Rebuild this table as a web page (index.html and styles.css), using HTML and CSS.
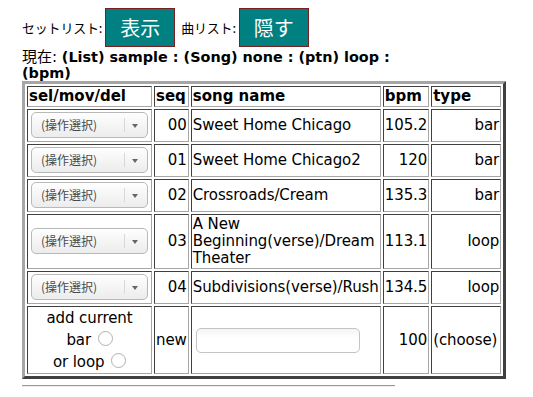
FILE: index.html
```html
<!DOCTYPE html>
<html lang="ja">
<head>
<meta charset="utf-8">
<title>セットリスト</title>
<link rel="stylesheet" href="styles.css">
</head>
<body>
<div class="page">
  <div class="toolbar">
    <span class="label">セットリスト:</span>
    <button class="toggle">表示</button>
    <span class="label">曲リスト:</span>
    <button class="toggle">隠す</button>
  </div>
  <div class="status">現在: <b>(List) sample : (Song) none : (ptn) loop : (bpm)</b></div>
  <table class="songs">
    <thead>
      <tr>
        <th class="c-sel">sel/mov/del</th>
        <th>seq</th>
        <th class="c-name">song name</th>
        <th>bpm</th>
        <th class="c-type">type</th>
      </tr>
    </thead>
    <tbody>
      <tr>
        <td><div class="op">(操作選択)<span class="arrow"></span></div></td>
        <td class="num">00</td>
        <td>Sweet Home Chicago</td>
        <td class="num">105.2</td>
        <td class="num">bar</td>
      </tr>
      <tr>
        <td><div class="op">(操作選択)<span class="arrow"></span></div></td>
        <td class="num">01</td>
        <td>Sweet Home Chicago2</td>
        <td class="num">120</td>
        <td class="num">bar</td>
      </tr>
      <tr>
        <td><div class="op">(操作選択)<span class="arrow"></span></div></td>
        <td class="num">02</td>
        <td>Crossroads/Cream</td>
        <td class="num">135.3</td>
        <td class="num">bar</td>
      </tr>
      <tr>
        <td><div class="op">(操作選択)<span class="arrow"></span></div></td>
        <td class="num">03</td>
        <td class="wrap">A New Beginning(verse)/Dream Theater</td>
        <td class="num">113.1</td>
        <td class="num">loop</td>
      </tr>
      <tr>
        <td><div class="op">(操作選択)<span class="arrow"></span></div></td>
        <td class="num">04</td>
        <td>Subdivisions(verse)/Rush</td>
        <td class="num">134.5</td>
        <td class="num">loop</td>
      </tr>
      <tr class="add">
        <td class="center">
          add current<br>
          bar <span class="radio"></span><br>
          or loop <span class="radio"></span>
        </td>
        <td>new</td>
        <td><div class="field"></div></td>
        <td class="num">100</td>
        <td>(choose)</td>
      </tr>
    </tbody>
  </table>
  <hr class="rule">
</div>
</body>
</html>
```

FILE: styles.css
```css
html, body {
  margin: 0;
  padding: 0;
  background: #fff;
}

body {
  font-family: "DejaVu Sans", "Noto Sans CJK JP", sans-serif;
  font-size: 15px;
  line-height: 17px;
  color: #000;
}

.page {
  padding: 8px 0 0 22px;
}

.toolbar {
  display: flex;
  align-items: center;
  gap: 3px;
}

.label {
  font-family: "Noto Sans CJK JP", sans-serif;
  font-size: 13px;
  letter-spacing: -0.2px;
}

.toggle {
  font-family: "Noto Sans CJK JP", sans-serif;
  font-size: 20px;
  color: #fff;
  background: #008080;
  border: 1px solid #7a1f1f;
  width: 70px;
  height: 39px;
  padding: 0;
  margin: 0 3px 0 0;
}

.status {
  width: 390px;
  margin-top: 2px;
  line-height: 16px;
}

.status b {
  font-size: 14.4px;
}

.songs {
  border-collapse: separate;
  border-spacing: 2px;
  border-style: solid;
  border-width: 3px;
  border-color: #a6a6a6 #404040 #404040 #a6a6a6;
  margin-top: 0;
}

.songs th,
.songs td {
  border: 1px solid;
  border-color: #404040 #a6a6a6 #a6a6a6 #404040;
  padding: 1px;
  text-align: left;
  vertical-align: middle;
}

.songs td {
  letter-spacing: -0.1px;
}

.songs th {
  font-weight: bold;
}

.c-sel { width: 120px; }
.c-type { width: 66px; }

.songs td.num {
  text-align: right;
}

.songs td.center {
  text-align: center;
  line-height: 22px;
  padding: 0 1px;
}

.wrap {
  width: 186px;
}

.op {
  position: relative;
  box-sizing: border-box;
  width: 117px;
  height: 26px;
  margin: 1px 2px 2px;
  padding-left: 9px;
  border: 1px solid #b8b8b8;
  border-radius: 5px;
  background: linear-gradient(#fefefe, #ececec);
  font-family: "Noto Sans CJK JP", sans-serif;
  font-size: 12px;
  line-height: 24px;
  letter-spacing: 0;
  color: #4a4a4a;
}

.op::after {
  content: "";
  position: absolute;
  top: 5px;
  right: 22px;
  width: 1px;
  height: 14px;
  background: #d8d8d8;
}

.arrow {
  position: absolute;
  top: 11px;
  right: 9px;
  border-left: 3px solid transparent;
  border-right: 3px solid transparent;
  border-top: 4px solid #666;
}

.radio {
  display: inline-block;
  width: 13px;
  height: 13px;
  border: 1px solid #b0b0b0;
  border-radius: 50%;
  vertical-align: middle;
  margin: -4px 0 0 2px;
}

.field {
  width: 162px;
  height: 23px;
  margin: 0 2px 0 3px;
  border: 1px solid #c4c4c4;
  border-radius: 5px;
  background: linear-gradient(#f4f4f4, #fff 40%);
}

.rule {
  width: 373px;
  margin: 6px 0 0;
  border: 0;
  border-top: 1px solid #9a9a9a;
  border-bottom: 1px solid #eee;
}
```
